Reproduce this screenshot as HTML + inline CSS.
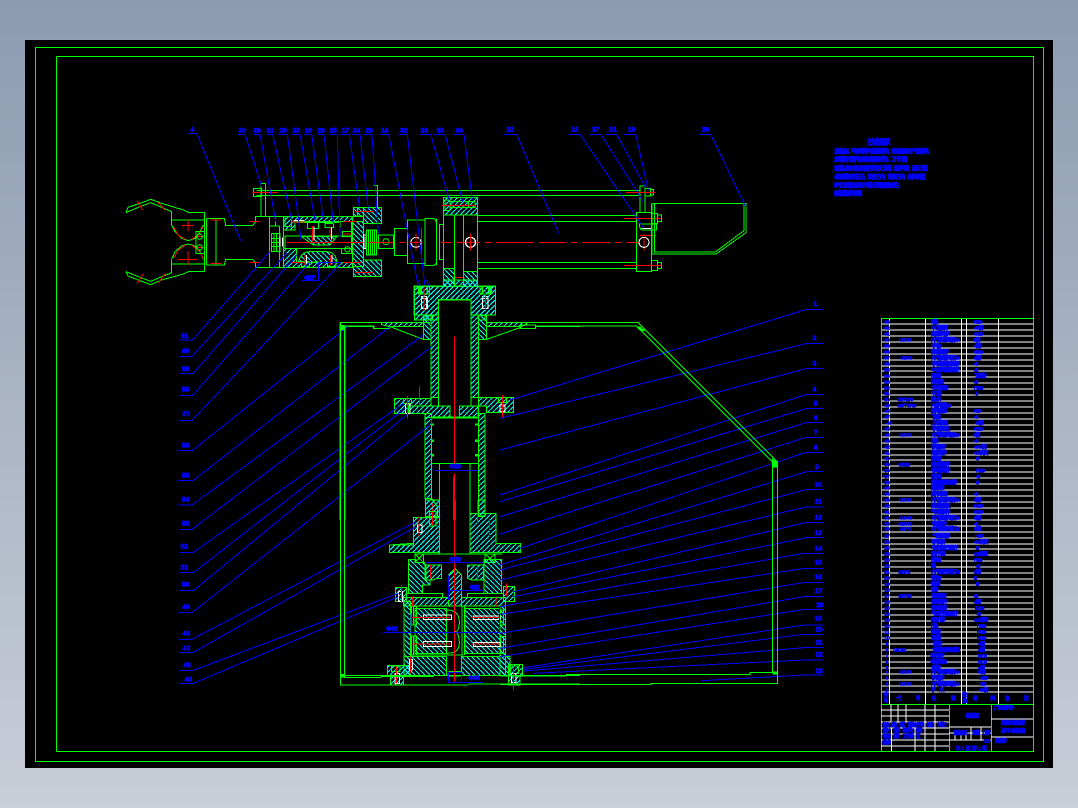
<!DOCTYPE html>
<html lang="zh"><head><meta charset="utf-8"><title>机械手装配图</title>
<style>
html,body{margin:0;padding:0;width:1078px;height:808px;overflow:hidden;background:linear-gradient(#8b9bb1,#c9ced8)}
svg{position:absolute;left:0;top:0;display:block}
path,rect,circle{fill:none;stroke:#0f0;stroke-width:3;shape-rendering:crispEdges}
.a{fill:url(#a)}.b{fill:url(#b)}.r{stroke:#f00}.l{stroke:#00f}.w{stroke:#fff}.f{fill:#0f0}.n{stroke:none}
text{fill:#00f;stroke:#00f;font-family:"Liberation Sans","Noto Sans CJK SC",sans-serif}
.tb text{font-size:15px;stroke-width:2.2px}
.lb text{font-size:20px;font-weight:bold;stroke-width:2.2px}
</style></head><body>
<svg width="1078" height="808" viewBox="0 0 1078 808" xmlns="http://www.w3.org/2000/svg">
<defs>
<pattern id="a" width="15" height="15" patternUnits="userSpaceOnUse"><path d="M-3 18L18 -3" style="stroke:#0ff;stroke-width:3.4;shape-rendering:auto"/></pattern>
<pattern id="b" width="15" height="15" patternUnits="userSpaceOnUse"><path d="M-3 -3L18 18" style="stroke:#0ff;stroke-width:3.4;shape-rendering:auto"/></pattern>
</defs>
<rect x="25" y="40" width="1028" height="728" style="fill:#000;stroke:none"/>
<path d="M35.5 47.5H1043.5V761.5H35.5ZM56.5 56.5H1033.5V751.5H56.5Z" style="stroke-width:1"/>

<!-- arm: zoom 1 -->
<g transform="translate(120 120) scale(.33333)">
<path d="M18 278L24 262L60 250L92 238L125 250L190 270L205 277H254V455H205L190 462L125 480L92 494L60 482L24 468L18 455"/>
<path d="M18 278L55 262L92 248L125 262L155 275V315M18 455L55 470L92 484L125 470L155 458V418M155 300H254M155 432H254M155 315L165 335 185 355 205 362 225 355 240 335 250 315M155 418L165 395 185 378 205 372 225 378 240 395 250 418"/>
<path class="r" d="M160 320L175 345 195 358M250 320L235 345 215 358M160 415L175 390 195 376M250 415L235 390 215 376M52 243L68 270M115 248L135 270M52 490L70 462M115 488L135 462M186 316H222M204 298V334M174 418H232M204 393V435M225 350H258M225 382H258"/>
<path d="M228 335H254V400H228Z"/><circle cx="239" cy="350" r="8"/><circle cx="239" cy="382" r="8"/>
<path d="M260 295H313L317 316H398L406 306V289H490M260 435H313L317 418H398L406 428V443H490M260 295V435M288 295V435M448 289V443M478 318V443M448 318H478M466 289V318"/>
<path class="r" d="M272 300H305M272 430H305M388 304H422M388 427H422"/>
<path d="M423 289V190H436V289M400 205H425V230H400ZM410 211H1072M410 227H1072M760 196H772V262"/>
<path class="r" d="M397 217H474"/>
<path class="a" d="M490 290H698V305H525V330H490Z"/>
<path class="a" d="M490 385H530V428H698V443H490Z"/>
<path class="b" d="M698 305H730V440H698Z"/>
<path class="b" d="M700 262H785V310H730V290H700ZM730 420H785V470H700V440H730Z"/>
<path d="M700 262H730V288H700ZM712 262V288"/><path class="w" d="M735 350V385"/>
<path d="M490 443V290M530 308H660V350M495 348H695V385H495ZM530 385H695M660 305H695V400H665V385"/>
<path class="b" d="M545 350L580 375H630L650 350Z"/>
<path class="b" d="M535 425C545 395 560 395 575 395H620C640 395 650 410 650 428Z"/>
<path d="M455 340H480V395H455ZM462 340V395M470 340V395M455 355H480M455 367H480M455 380H480"/><path class="w" d="M480 352V380M487 352V380"/>
<path d="M562 305H595V325H562ZM615 310H640V322H615ZM545 425H568V440H545ZM622 428H648V440H622ZM495 290H515V320H495ZM668 335H695V350H668Z"/>
<circle cx="682" cy="388" r="8"/>
<path class="r" d="M578 318V365M630 320V360M555 405V435M632 405V435M515 306H555M515 428H550M670 305H710M670 428H725M668 342H695"/>
<path class="w" d="M582 320V362M635 322V358M559 405V430M636 405V430M520 302H552"/>
<path d="M730 345H740V385H730Z" style="stroke:#fff"/>
<path d="M740 330H770V405H740ZM746 330V405M752 330V405M758 330V405M764 330V405"/><path d="M775 345H820V385H775Z"/><circle cx="798" cy="365" r="9"/>
<path d="M823 325H862V407H823ZM862 300H915V431H862ZM915 295H935Q950 295 950 315V420Q950 437 935 437H915ZM950 295V437M958 313H970V418H958Z"/>
<path class="r" d="M500 367H730M745 367H820M838 367H855M880 367H895M905 322V412M705 275H760M705 458H760"/>
<path d="M1003 285V445M1030 285V455M970 232V500M1072 232V500M970 232H1072"/>
<path class="a" d="M970 232H1072V285H1030L1015 285 1003 285H970Z"/>
<path d="M975 240H990V272H975ZM990 245H1065V262H990ZM1045 245V262"/><path class="r" d="M965 256H1068M1005 472H1030"/>
<path class="b" d="M970 445H1003V500H970Z"/><path class="b" d="M1030 455H1072V500H1030Z"/>
<path class="a" d="M883 500H1127V585H1053V540H955V600H883Z"/>
<path d="M915 586H938V600H915ZM1075 586H1095V600H1075Z"/>
<path d="M898 500H928V522H898ZM905 500V522M921 500V522M1080 500H1112V522H1080ZM1087 500V522M1105 500V522"/>
<path class="w" d="M905 530H920V565H905ZM1088 530H1104V565H1088Z"/><path class="r" d="M912 500V575M1096 515V575"/>
<circle class="w" cx="888" cy="367" r="15"/><path class="r" d="M888 340V392M870 367H905"/>
<circle class="w" cx="1052" cy="367" r="15"/><path class="r" d="M1052 342V392M1035 367H1070"/>
<path class="l" d="M205 40H230L362 362M352 43H375L425 200M400 43H420L468 308M440 43H458L515 300M475 43H502L545 370M515 43H540L585 300M552 43H575L610 300M592 43H612L640 310M628 43H652L660 350M660 43H688L718 260M696 43H720L745 270M732 43H756L775 340M778 43H806L895 500M835 43H862L915 500M898 43H932L988 240M942 43H975L1028 245M1000 43H1032L1057 240"/>
<path class="l" d="M544 482H595V428H665"/>
<g class="lb"><text x="212" y="34">4</text><text x="356" y="37">30</text><text x="400" y="37">29</text><text x="440" y="37">31</text><text x="478" y="37">28</text><text x="518" y="37">15</text><text x="554" y="37">16</text><text x="592" y="37">26</text><text x="628" y="37">25</text><text x="665" y="37">17</text><text x="698" y="37">24</text><text x="736" y="37">23</text><text x="783" y="37">14</text><text x="840" y="37">32</text><text x="902" y="37">33</text><text x="950" y="37">35</text><text x="1006" y="37">34</text><text x="552" y="480" textLength="34">Φ30H7</text></g>
</g>

<!-- cylinder: zoom 2 -->
<g transform="translate(440 120) scale(.33333)">
<path d="M113 211H600M113 227H600M113 286H589M113 304H589M113 427H589M113 445H589"/>
<path d="M600 278V198H615V278M589 278H635V455H589Z"/>
<path d="M615 205H632V228H615ZM632 209H641V225H632ZM635 280H652V310H635ZM652 285H665V304H652ZM635 421H652V451H635ZM652 428H665V446H652Z"/>
<path d="M598 312H650V330H605Q598 325 598 312Z"/>
<path class="w" d="M605 325H636"/>
<path class="r" d="M558 217H645M550 295H665M552 436H665M600 346H648M612 342V392M5 367H35M50 367H120M135 367H155M168 367H280M297 367H380M393 367H412M427 367H508M525 367H545M560 367H595"/>
<circle class="w" cx="612" cy="367" r="15"/><circle class="w" cx="91" cy="367" r="15"/>
<path class="r" d="M91 342V390"/>
<path d="M636 250H918V338L828 402H636ZM644 250V396H826L912 332V250"/>
<path d="M634 250V402" />
<path class="l" d="M190 43H230L356 340M385 43H420L610 322M450 43H483L610 245M495 43H530L618 205M552 43H587L625 210M778 43H812L918 262"/>
<g class="lb"><text x="200" y="34">22</text><text x="393" y="34">18</text><text x="456" y="34">37</text><text x="507" y="34">21</text><text x="563" y="34">19</text><text x="786" y="34">20</text></g>
<text x="1282" y="74" textLength="70" style="font-size:23px;stroke-width:2.4px">技术要求</text>
<g class="tb"><text x="1182" y="100" textLength="296" style="font-size:18px">1.装配前，所有零件用煤油清洗，滚动轴承用汽油清洗，</text>
<text x="1182" y="125" textLength="233" style="font-size:18px">2.润滑脂用量为轴承空隙体积的1/2，工作可靠，</text>
<text x="1182" y="151" textLength="293" style="font-size:18px">3.空载试验时各运动部件灵活无卡滞，运转平稳，温升正常，</text>
<text x="1182" y="177" textLength="286" style="font-size:18px">4.齿面接触不低于，齿宽方向，齿高方向，运转正常，</text>
<text x="1182" y="202" textLength="210" style="font-size:18px">5.气缸活塞运动应平稳无泄漏现象发生，</text>
<text x="1182" y="227" textLength="96" style="font-size:18px">6.按规定涂防锈漆，</text></g>
</g>

<!-- neck: zoom 3 -->
<g transform="translate(340 280) scale(.33333)">
<path class="a" d="M310 0H413V18H467V105H393V58H296V105H222V18H310Z"/>
<path d="M342 0V18H370V0"/>
<path d="M296 58H393"/>
<path d="M235 18H268V42H235ZM420 18H455V42H420ZM242 18V42M262 18V42M428 18V42M448 18V42"/><path class="w" d="M245 55H262V85H245ZM428 55H444V85H428Z"/><path class="r" d="M252 22V92M436 22V92"/>
<path class="l" d="M236 0L240 16M260 0L266 16"/>
<path class="a" d="M273 105H296V353H273Z"/><path class="a" d="M393 105H415V353H393Z"/>
<path class="b" d="M250 105H273V178H250Z"/><path class="b" d="M415 105H440V178H415Z"/>
<path class="a" d="M125 128H250V140H150L125 134Z"/><path class="a" d="M440 128H560V134L540 140H440Z"/>
<path d="M150 140L250 178M440 178L540 143M0 128H125M15 140H100V146H148V140M560 128H720M586 140H720M540 146H586V140"/>
<path class="f n" d="M0 140H15V152H0Z"/><path d="M0 128V720M15 140V720"/>
<path class="a" d="M163 355H273V378H205V400H163Z"/><path class="a" d="M415 352H520V398H440V378H415Z"/>
<path class="a" d="M205 378H330V412H255V400H205Z"/><path class="a" d="M358 378H415V412H358Z"/><path d="M330 378V412"/><path d="M296 353V378M393 353V378"/>
<path d="M190 356H215V370H190ZM475 352H500V368H475Z"/><path class="w" d="M197 372H210V400H197ZM480 375H495V395H480Z"/>
<path class="r" d="M202 348V415M488 345V412M238 320V378"/>
<path class="a" d="M255 400H275V655H255Z"/><path class="a" d="M415 400H435V708H415Z"/>
<path d="M275 412H415"/><path class="f n" d="M274 410H416V416H274ZM274 430H282V436H274ZM274 478H282V486H274ZM274 522H282V530H274ZM405 430H414V436H405ZM405 478H414V486H405ZM405 522H414V530H405Z"/>
<path d="M275 550H415M298 550V720M390 550V720"/>
<path class="a" d="M257 655H275L292 680V710H257Z"/>
<path d="M268 695H288V712H268Z"/><path class="r" d="M343 170V550M343 580V720M340 590V720M277 670V720M412 390V412M412 660V720M275 412V435"/>
<path class="l" d="M280 571H415"/>
<g class="lb"><text x="327" y="566" textLength="36">Φ50</text></g>
</g>

<!-- base: zoom 4 -->
<g transform="translate(340 500) scale(.33333)">
<path class="a" d="M255 0H298V52H220V130L148 135V158H298"/>
<path class="a" d="M390 40H468V130H541V158H390Z"/>
<path class="a" d="M220 52H298V158H148V135H220Z"/>
<path d="M225 162H487M298 0V162M390 0V162"/>
<path class="a" d="M415 0H435V50H415Z"/>
<path d="M225 162H250V188H225ZM225 162L250 188M250 162L225 188M435 162H465V188H435ZM435 162L465 188M465 162L435 188"/>
<path class="b" d="M205 178H228V188H255V240H270V255H248V280H205Z"/>
<path class="b" d="M432 178H485V280H432Z"/>
<path class="a" d="M166 262H200V305H166Z"/><path class="a" d="M490 260H524V305H490Z"/>
<path d="M200 280H308V292H200ZM382 280H490V292H382Z"/>
<path class="a" d="M190 292H325V318H190Z"/><path class="a" d="M365 292H497V318H365Z"/>
<path class="a" d="M325 225L345 205L365 225V318H325Z"/>
<path class="a" d="M258 195H305V235H290L280 240H258Z"/><path class="a" d="M382 235V195H430V240H395Z"/>
<path class="b" d="M192 305H212V527H192Z"/>
<path class="b" d="M480 318H497V527H480Z"/>
<path class="b" d="M225 325H320V460H225Z"/><path class="b" d="M375 325H480V460H375Z"/>
<path class="b" d="M192 470H320V527H192Z"/><path class="b" d="M365 470H510V527H365Z"/>
<path d="M212 318H370M212 465H370M366 318V465M373 318V465M320 330Q358 330 358 365Q358 395 345 395Q358 400 358 430Q358 460 320 460"/>
<path d="M215 320H230V375H215ZM220 320V375M215 408H230V465H215ZM220 408V465M482 330H497V375H482ZM490 330V375M482 410H497V460H482ZM490 410V460"/>
<path class="w" d="M250 345H335V358H250ZM250 425H335V440H250ZM400 348H480V358H400ZM400 428H480V440H400ZM175 275H188V305H175ZM233 75H246V98H233Z"/>
<path class="r" d="M215 352H330M215 432H335M395 352H480M395 432H480M184 255V310M237 50V110M499 250V290M468 290V320M448 55V110M412 10V70M217 290V320M413 195V235M272 195V235M277 30V80"/>
<path d="M268 35H288V78H268Z"/>
<path class="a" d="M142 496H210V527H142Z"/><path class="a" d="M505 494H548V527H505Z"/>
<path class="a" d="M152 527H190V555H152Z"/><path class="a" d="M505 527H540V555H505Z"/>
<path d="M155 498H180V515H155ZM512 498H536V520H512Z"/><path class="w" d="M165 520H178V550H165ZM515 520H528V548H515ZM208 478H218V510H208Z"/>
<path class="r" d="M170 500V550M520 490V570M212 470V520"/>
<path d="M0 527H125M125 527H720M0 555H385M385 552H720M325 515H365M325 528H365"/>
<path class="r" d="M343 0V170M343 180V545M340 0V60M346 0V60"/>
<path class="l" d="M255 187H430M325 272H432M325 225V300M325 518H365V548H325ZM325 547H428M128 397H480M213 340V400M478 320V400"/>
<g class="lb"><text x="327" y="184" textLength="36">Φ30</text><text x="388" y="268" textLength="32">Φ25</text><text x="385" y="540" textLength="34">Φ40</text><text x="138" y="393" textLength="36">Φ60</text></g>
</g>

<!-- left leaders: zoom 8 -->
<g transform="translate(170 310) scale(.33333)">
<path class="l" d="M27 90H68L300 -175M30 139H66L350 -170M30 190H70L380 -165M27 256H68L425 -150M27 331H66L510 -138M24 421H68L535 48M24 511H70L660 50M24 585H66L760 75M28 658H66L785 110M28 727H70L700 280M28 788H70L705 295M28 842H70L710 315M26 908H66L780 345M26 988H66L738 635M28 1027H70L738 650M28 1081H70L685 850M28 1120H70L685 860"/>
<path d="M511 37V1125H790M511 37H780M524 48V1103H632L634 1099H790M524 48H612V55H655"/>
<path class="f n" d="M511 45H524V60H511ZM511 1092H524V1103H511Z"/>
<g class="lb"><text x="33" y="84">61</text><text x="36" y="129">60</text><text x="36" y="183">59</text><text x="35" y="245">58</text><text x="38" y="318">57</text><text x="36" y="413">56</text><text x="36" y="503">55</text><text x="36" y="575">54</text><text x="36" y="647">53</text><text x="32" y="716">52</text><text x="32" y="778">51</text><text x="36" y="830">50</text><text x="37" y="897">49</text><text x="38" y="976">48</text><text x="38" y="1021">47</text><text x="40" y="1071">46</text><text x="44" y="1114">45</text></g>
</g>

<!-- right leaders: zoom 9 -->
<g transform="translate(500 295) scale(.33333)">
<path class="l" d="M970 43H920L30 315M970 145H922L0 370M970 220H922L0 465M970 298H920L0 600M970 341H918L0 620M970 383H918L0 665M970 427H918L0 717M970 472H918L60 760M970 530H920L0 810M970 584H918L0 825M970 636H918L0 855M970 682H920L40 890M970 728H920L40 905M970 775H912L0 935M970 820H915L0 958M970 862H915L0 1015M970 905H912L0 1060M970 944H908L0 1085M970 990H912L70 1118M970 1018H912L70 1123M970 1058H912L70 1128M970 1095H912L100 1135M970 1140H910L605 1157"/>
<path d="M55 82H413L832 500V1165H453V1168H0M107 93H410L817 500V1132H750V1138H200V1143H0M62 90H107V100H62Z"/>
<path class="f n" d="M408 94H420L436 108H420ZM816 488L833 504V518H817ZM817 1130H832V1138H817Z"/>
<path d="M25 110L62 97"/>
<g class="lb"><text x="940" y="33">1</text><text x="938" y="135">2</text><text x="938" y="212">3</text><text x="938" y="290">4</text><text x="942" y="332">5</text><text x="942" y="375">6</text><text x="942" y="418">7</text><text x="942" y="464">8</text><text x="945" y="522">9</text><text x="944" y="575">10</text><text x="944" y="626">11</text><text x="944" y="673">12</text><text x="944" y="720">13</text><text x="944" y="766">14</text><text x="944" y="808">15</text><text x="944" y="852">16</text><text x="944" y="894">17</text><text x="948" y="936">18</text><text x="944" y="977">19</text><text x="946" y="1010">20</text><text x="946" y="1048">21</text><text x="946" y="1085">22</text><text x="946" y="1134">23</text></g>
</g>

<!-- table lines -->
<path d="M881.5 324H1033M881.5 330H1033M881.5 336H1033M881.5 342H1033M881.5 348H1033M881.5 354H1033M881.5 360H1033M881.5 366H1033M881.5 371H1033M881.5 377H1033M881.5 383H1033M881.5 389H1033M881.5 395H1033M881.5 401H1033M881.5 407H1033M881.5 413H1033M881.5 419H1033M881.5 425H1033M881.5 431H1033M881.5 437H1033M881.5 443H1033M881.5 449H1033M881.5 455H1033M881.5 460H1033M881.5 466H1033M881.5 472H1033M881.5 478H1033M881.5 484H1033M881.5 490H1033M881.5 496H1033M881.5 502H1033M881.5 508H1033M881.5 514H1033M881.5 520H1033M881.5 526H1033M881.5 532H1033M881.5 538H1033M881.5 544H1033M881.5 549H1033M881.5 555H1033M881.5 561H1033M881.5 567H1033M881.5 573H1033M881.5 579H1033M881.5 585H1033M881.5 591H1033M881.5 597H1033M881.5 603H1033M881.5 609H1033M881.5 615H1033M881.5 621H1033M881.5 627H1033M881.5 632H1033M881.5 638H1033M881.5 644H1033M881.5 650H1033M881.5 656H1033M881.5 662H1033M881.5 668H1033M881.5 674H1033M881.5 680H1033M881.5 686H1033M881.5 692H1033" style="stroke:#fff;stroke-width:1"/>
<path d="M889.5 318V704M925.5 318V704M961.5 318V704M966.5 318V704M998.5 318V704" style="stroke:#fff;stroke-width:1"/>
<path d="M881.5 318.5H1033.5M881.5 704.5H1033.5M881.5 318V751M1033.5 318V751M949.5 704V751M991.5 704V751" style="stroke:#0f0;stroke-width:1"/>
<path d="M881 710H949M881 716H949M881 722H949M881 728H949M881 734H949M881 740H949M881 746H949M891 704V722M898 704V722M906 704V722M925 704V751M935 704V751M891.5 728V751M915 728V751M949 727H991M949 733H991M949 740H991M971 727V740M981 727V740M955 733V740M961 733V740M966 733V740M991 719H1033M991 737H1033" style="stroke:#fff;stroke-width:1"/>

<!-- table text upper -->
<g class="tb" transform="translate(875 310) scale(.33333)">
<text x="28" y="41">63</text><text x="168" y="41" textLength="22">端盖</text><text x="297" y="41" textLength="25">HT200</text>
<text x="28" y="58">62</text><text x="168" y="58" textLength="52">中心轴套筒</text><text x="297" y="58" textLength="28">45钢</text>
<text x="28" y="77">61</text><text x="168" y="77" textLength="57">圆锥滚子轴承</text><text x="297" y="77" textLength="28">GCr15</text>
<text x="28" y="94">60</text><text x="72" y="94" textLength="36">GB70</text><text x="168" y="94" textLength="84">内六角圆柱头螺钉M8</text><text x="294" y="94" textLength="22">35钢</text>
<text x="28" y="112">59</text><text x="168" y="112" textLength="30">中间轴</text><text x="297" y="112" textLength="21">45钢</text>
<text x="28" y="130">58</text><text x="168" y="130" textLength="54">弹簧垫圈组件</text><text x="297" y="130" textLength="27">65Mn</text>
<text x="28" y="148">57</text><text x="76" y="148" textLength="36">GB93</text><text x="168" y="148" textLength="87">内六角圆柱头螺钉M6</text><text x="297" y="148" textLength="21">35钢</text>
<text x="28" y="166">56</text><text x="168" y="166" textLength="87">中间法兰盘连接套组件</text><text x="297" y="166" textLength="13">45</text>
<text x="28" y="184">55</text><text x="168" y="184" textLength="87">中心轴承端盖连接组件</text><text x="297" y="184" textLength="13">45</text>
<text x="28" y="202">54</text><text x="168" y="202" textLength="30">密封圈</text><text x="297" y="202" textLength="38">丁腈橡胶</text>
<text x="28" y="220">53</text><text x="168" y="220" textLength="40">回转盖板</text><text x="297" y="220" textLength="13">45</text>
<text x="28" y="238">52</text><text x="168" y="238" textLength="52">中间连接套</text><text x="297" y="238" textLength="28">HT200</text>
<text x="28" y="255">51</text><text x="168" y="255" textLength="32">中心轴</text><text x="300" y="255" textLength="10">45</text>
<text x="28" y="273">50</text><text x="66" y="273" textLength="48">GB/T 276</text><text x="168" y="273" textLength="30">轴承</text>
<text x="28" y="291">49</text><text x="66" y="291" textLength="58">GB/T 5783</text><text x="168" y="291" textLength="60">六角头螺栓M8</text>
<text x="28" y="307">48</text><text x="168" y="307" textLength="50">回转液压缸</text><text x="297" y="307" textLength="21">HT15</text>
<text x="28" y="326">47</text><text x="168" y="326" textLength="30">下底盘</text><text x="297" y="326" textLength="13">45</text>
<text x="34" y="344">46</text><text x="168" y="344" textLength="52">上法兰盘组</text><text x="300" y="344" textLength="25">45钢</text>
<text x="28" y="362">45</text><text x="168" y="362" textLength="58">中间连接法兰</text><text x="297" y="362" textLength="28">HT200</text>
<text x="28" y="380">44</text><text x="72" y="380" textLength="36">GB70</text><text x="168" y="380" textLength="84">内六角圆柱头螺钉M10</text><text x="294" y="380" textLength="22">35钢</text>
<text x="28" y="397">43</text><text x="168" y="397" textLength="22">活塞</text><text x="297" y="397" textLength="13">45</text>
<text x="28" y="415">42</text><text x="168" y="415" textLength="46">手臂连接杆</text><text x="297" y="415" textLength="38">40Cr钢</text>
<text x="28" y="433">41</text><text x="168" y="433" textLength="48">活塞杆组件</text><text x="297" y="433" textLength="43">40Cr调质</text>
<text x="28" y="450">40</text><text x="168" y="450" textLength="30">定位销</text><text x="303" y="450" textLength="9">45</text>
<text x="28" y="468">39</text><text x="70" y="468" textLength="36">GB119</text><text x="168" y="468" textLength="58">圆柱销连接件</text>
<text x="28" y="486">38</text><text x="168" y="486" textLength="58">导向套筒组件</text><text x="303" y="486" textLength="27">HT200</text>
<text x="28" y="504">37</text><text x="168" y="504" textLength="32">齿轮轴</text><text x="303" y="504" textLength="13">45</text>
<text x="28" y="522">36</text><text x="168" y="522" textLength="80">活塞缸底部密封盖组件</text><text x="302" y="522" textLength="10">45</text>
<text x="28" y="539">35</text><text x="168" y="539" textLength="40">连接支架</text>
<text x="28" y="557">34</text><text x="168" y="557" textLength="50">回转支承座</text><text x="297" y="557" textLength="13">45</text>
<text x="28" y="575">33</text><text x="72" y="575" textLength="36">GB70</text><text x="168" y="575" textLength="84">内六角圆柱头螺钉M6</text><text x="297" y="575" textLength="21">35钢</text>
<text x="28" y="593">32</text><text x="168" y="593" textLength="58">油缸盖连接板</text><text x="297" y="593" textLength="27">HT15</text>
<text x="28" y="610">31</text><text x="168" y="610" textLength="58">气缸盖密封件</text><text x="297" y="610" textLength="27">HT15</text>
<text x="28" y="628">30</text><text x="72" y="628" textLength="40">GB93</text><text x="168" y="628" textLength="87">内六角圆柱头螺钉M5</text><text x="297" y="628" textLength="21">35钢</text>
<text x="28" y="646">29</text><text x="70" y="646" textLength="42">GB/T 97</text><text x="168" y="646" textLength="48">平垫圈组件</text><text x="297" y="646" textLength="13">45</text>
<text x="28" y="662">28</text><text x="74" y="662" textLength="36">GB70</text><text x="168" y="662" textLength="87">内六角圆柱头螺钉M4</text><text x="297" y="662" textLength="21">35钢</text>
</g>

<!-- table text lower -->
<g class="tb" transform="translate(875 530) scale(.33333)">
<text x="28" y="22">27</text><text x="172" y="22" textLength="54">气缸活塞组件</text><text x="300" y="22" textLength="24">HT15</text>
<text x="28" y="40">26</text><text x="168" y="40" textLength="42">导向支架</text><text x="297" y="40" textLength="43">40Cr调质</text>
<text x="28" y="58">25</text><text x="168" y="58" textLength="82">中间连接法兰盘组件</text><text x="303" y="58" textLength="9">45</text>
<text x="28" y="76">24</text><text x="168" y="76" textLength="44">防护外罩</text><text x="297" y="76" textLength="43">Q235钢板</text>
<text x="28" y="94">23</text><text x="168" y="94" textLength="32">连接块</text><text x="297" y="94" textLength="25">HT200</text>
<text x="28" y="112">22</text><text x="168" y="112" textLength="12">轴</text><text x="303" y="112" textLength="13">45</text>
<text x="28" y="130">21</text><text x="70" y="130" textLength="36">GB70</text><text x="168" y="130" textLength="87">内六角圆柱头螺钉M8</text><text x="297" y="130" textLength="21">35钢</text>
<text x="28" y="148">20</text><text x="168" y="148" textLength="30">销轴</text><text x="297" y="148" textLength="8">45</text>
<text x="28" y="166">19</text><text x="166" y="166" textLength="30">支撑座</text><text x="303" y="166" textLength="7">45</text>
<text x="28" y="184">18</text><text x="168" y="184" textLength="22">弹簧</text>
<text x="28" y="202">17</text><text x="70" y="202" textLength="40">GB/T 93</text><text x="168" y="202" textLength="46">弹簧垫圈</text><text x="297" y="202" textLength="13">65</text>
<text x="28" y="220">16</text><text x="168" y="220" textLength="50">活塞连接杆</text><text x="297" y="220" textLength="21">45钢</text>
<text x="28" y="238">15</text><text x="168" y="238" textLength="48">滑动轴套</text><text x="300" y="238" textLength="28">ZQSn6</text>
<text x="28" y="256">14</text><text x="168" y="256" textLength="82">气缸法兰连接盖组件</text><text x="306" y="256" textLength="12">45</text>
<text x="28" y="274">13</text><text x="168" y="274" textLength="42">缸筒外套</text><text x="297" y="274" textLength="43">40Cr调质</text>
<text x="28" y="292">12</text><text x="168" y="292" textLength="22">压盖</text><text x="306" y="292" textLength="28">HT200</text>
<text x="28" y="310">11</text><text x="168" y="310" textLength="30">缸盖板</text><text x="306" y="310" textLength="28">HT200</text>
<text x="28" y="328">10</text><text x="168" y="328" textLength="30">连接座</text><text x="306" y="328" textLength="28">HT200</text>
<text x="32" y="346">9</text><text x="172" y="346" textLength="30">活塞杆</text><text x="309" y="346" textLength="21">45钢</text>
<text x="32" y="364">8</text><text x="55" y="364" textLength="39">GB 292</text><text x="172" y="364" textLength="83">角接触球轴承手爪组件</text><text x="309" y="364" textLength="21">45钢</text>
<text x="32" y="382">7</text><text x="166" y="382" textLength="42">手爪连杆</text><text x="309" y="382" textLength="27">HT15</text>
<text x="32" y="400">6</text><text x="166" y="400" textLength="50">中间连接块</text><text x="309" y="400" textLength="27">HT15</text>
<text x="32" y="418">5</text><text x="168" y="418" textLength="30">支撑板</text><text x="309" y="418" textLength="21">45钢</text>
<text x="32" y="430">4</text><text x="72" y="430" textLength="36">GB70</text><text x="168" y="430" textLength="84">内六角圆柱头螺钉M6</text><text x="309" y="430" textLength="23">35钢</text>
<text x="32" y="448">3</text><text x="168" y="448" textLength="40">手爪连杆</text><text x="312" y="448" textLength="28">HT200</text>
<text x="32" y="466">2</text><text x="72" y="466" textLength="36">GB70</text><text x="168" y="466" textLength="84">内六角圆柱头螺钉M4</text><text x="312" y="466" textLength="22">HT15</text>
<text x="32" y="484">1</text><text x="168" y="484" textLength="40">手爪</text><text x="312" y="484" textLength="28">40Cr钢</text>
<text x="26" y="500">序</text><text x="26" y="518">号</text><text x="64" y="510">代</text><text x="122" y="510">号</text><text x="170" y="510">名</text><text x="228" y="510">称</text><text x="262" y="500">数</text><text x="262" y="518">量</text><text x="294" y="510">材</text><text x="346" y="510">料</text><text x="390" y="510">备</text><text x="446" y="510">注</text>
<text x="357" y="538" textLength="61">广东工业大学</text>
<text x="272" y="562" textLength="40">装配图</text>
<text x="378" y="584" textLength="75">回转式搬运机</text>
<text x="378" y="608" textLength="74">械手装配图</text>
<text x="360" y="638" textLength="36">图纸号</text>
<text x="237" y="613" textLength="43">图样标记</text><text x="292" y="613" textLength="24">重量</text><text x="323" y="613" textLength="23">比例</text>
<text x="326" y="637" textLength="20">1:10</text>
<text x="242" y="660" textLength="94">共 1 张 第 1 张</text>
<text x="22" y="589" textLength="20">标记</text><text x="47" y="589" textLength="20">处数</text><text x="72" y="589" textLength="20">分区</text><text x="98" y="589" textLength="50">更改文件号</text><text x="155" y="589" textLength="24">签名</text><text x="186" y="589" textLength="30">年月日</text>
<text x="22" y="606" textLength="26">设计</text><text x="55" y="606" textLength="20">李明</text><text x="82" y="606" textLength="34">标准化</text><text x="122" y="606" textLength="20">日期</text>
<text x="22" y="624" textLength="26">审核</text><text x="55" y="624" textLength="20">张华</text><text x="82" y="624" textLength="34">工艺师</text><text x="122" y="624" textLength="10">王</text>
<text x="22" y="642" textLength="26">批准</text>
</g>
</svg>
</body></html>
